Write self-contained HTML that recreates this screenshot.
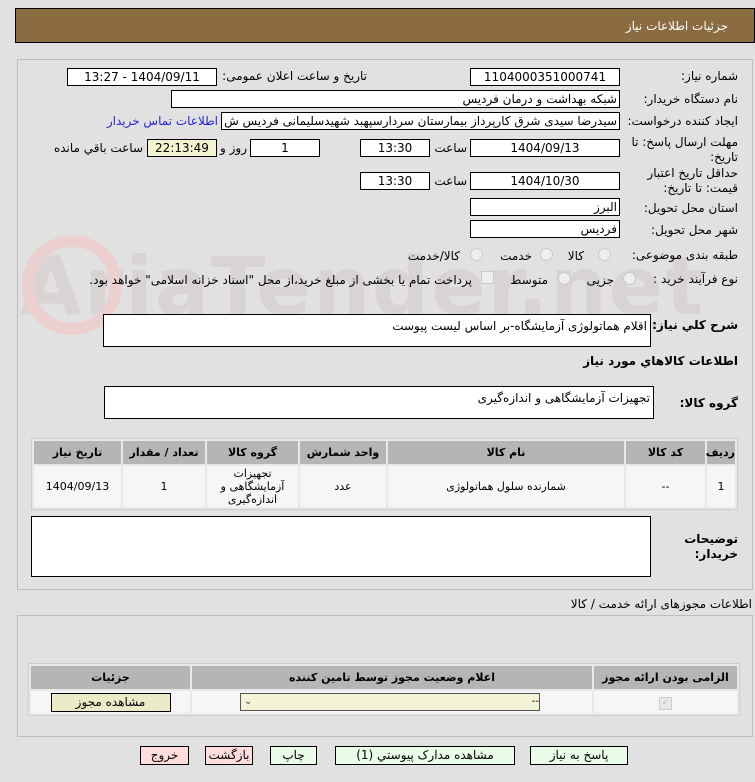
<!DOCTYPE html>
<html><head><meta charset="utf-8"><style>
body{margin:0;width:755px;height:782px;background:#e1e1e1;font-family:"DejaVu Sans","Liberation Sans",sans-serif;font-size:11px;color:#000;position:relative;overflow:hidden}
.a{position:absolute;white-space:nowrap}
.box{position:absolute;background:#fff;border:1px solid #000;box-sizing:border-box;font-size:12px;line-height:16px;text-align:center;direction:rtl}
.l{position:absolute;direction:rtl;text-align:right;white-space:nowrap;font-size:12px}
.panel{position:absolute;border:1px solid #bdbdbd;box-sizing:border-box}
table{border-collapse:separate;border-spacing:2px;position:absolute;direction:rtl;background:#e8e8e8;border:1px solid #ccc;table-layout:fixed}
th{background:#b5b5b5;font-weight:bold;font-size:11px;height:23px;padding:0}
td{background:#f6f6f6;text-align:center;font-size:11px;padding:0}
.btn{position:absolute;border:1px solid #000;box-sizing:border-box;height:19px;text-align:center;font-size:12px;line-height:17px;background:#e9fde9;direction:rtl}
.rad{position:absolute;width:11px;height:11px;border-radius:50%;border:1px solid #c8c8c8;background:#eee}
</style></head><body>
<div class="a" style="left:15px;top:8px;width:740px;height:35px;background:#8b6b40;border:1px solid #000;box-sizing:border-box"></div>
<div class="l" style="right:27px;top:19px;color:#fff;font-size:12px">جزئیات اطلاعات نیاز</div>
<div class="a" style="left:20px;top:240px;font-size:80px;color:#d9d3d3;font-weight:bold;letter-spacing:2px">AriaTender.net</div>
<div class="a" style="left:22px;top:235px;width:100px;height:100px;border-radius:50%;border:12px solid #ecd0d0;box-sizing:border-box"></div>
<div class="panel" style="left:17px;top:59px;width:736px;height:531px"></div>

<div class="l" style="right:17px;top:69px">شماره نیاز:</div>
<div class="box" style="left:470px;top:68px;width:150px;height:18px">1104000351000741</div>
<div class="l" style="right:388px;top:69px">تاریخ و ساعت اعلان عمومی:</div>
<div class="box" style="left:67px;top:68px;width:150px;height:18px">1404/09/11 - 13:27</div>

<div class="l" style="right:17px;top:92px">نام دستگاه خریدار:</div>
<div class="box" style="left:171px;top:90px;width:449px;height:18px;text-align:right;padding-right:2px">شبکه بهداشت و درمان فردیس</div>

<div class="l" style="right:17px;top:114px">ایجاد کننده درخواست:</div>
<div class="box" style="left:221px;top:112px;width:399px;height:18px;text-align:right;padding-right:2px;overflow:hidden">سیدرضا سیدی شرق کارپرداز بیمارستان سردارسپهبد شهیدسلیمانی فردیس ش</div>
<div class="l" style="right:537px;top:114px;color:#2424d6">اطلاعات تماس خریدار</div>

<div class="l" style="right:17px;top:135px">مهلت ارسال پاسخ: تا</div>
<div class="l" style="right:17px;top:150px">تاریخ:</div>
<div class="box" style="left:470px;top:139px;width:150px;height:18px">1404/09/13</div>
<div class="l" style="right:288px;top:141px">ساعت</div>
<div class="box" style="left:360px;top:139px;width:70px;height:18px">13:30</div>
<div class="box" style="left:250px;top:139px;width:70px;height:18px">1</div>
<div class="l" style="right:508px;top:141px">روز و</div>
<div class="box" style="left:147px;top:139px;width:70px;height:18px;background:#f3f3d0">22:13:49</div>
<div class="l" style="right:612px;top:141px">ساعت باقي مانده</div>

<div class="l" style="right:17px;top:166px">حداقل تاریخ اعتبار</div>
<div class="l" style="right:17px;top:181px">قیمت: تا تاریخ:</div>
<div class="box" style="left:470px;top:172px;width:150px;height:18px">1404/10/30</div>
<div class="l" style="right:288px;top:174px">ساعت</div>
<div class="box" style="left:360px;top:172px;width:70px;height:18px">13:30</div>

<div class="l" style="right:17px;top:201px">استان محل تحویل:</div>
<div class="box" style="left:470px;top:198px;width:150px;height:18px;text-align:right;padding-right:2px">البرز</div>
<div class="l" style="right:17px;top:223px">شهر محل تحویل:</div>
<div class="box" style="left:470px;top:220px;width:150px;height:18px;text-align:right;padding-right:2px">فردیس</div>

<div class="l" style="right:17px;top:248px">طبقه بندی موضوعی:</div>
<div class="rad" style="left:598px;top:248px"></div><div class="l" style="right:171px;top:249px">کالا</div>
<div class="rad" style="left:540px;top:248px"></div><div class="l" style="right:223px;top:249px">خدمت</div>
<div class="rad" style="left:470px;top:248px"></div><div class="l" style="right:295px;top:249px">کالا/خدمت</div>

<div class="l" style="right:17px;top:272px">نوع فرآیند خرید :</div>
<div class="rad" style="left:623px;top:272px"></div><div class="l" style="right:141px;top:273px">جزیی</div>
<div class="rad" style="left:558px;top:272px"></div><div class="l" style="right:207px;top:273px">متوسط</div>
<div class="a" style="left:481px;top:271px;width:11px;height:11px;border:1px solid #c8c8c8;background:#eee"></div>
<div class="l" style="right:283px;top:273px">پرداخت تمام یا بخشی از مبلغ خرید،از محل "اسناد خزانه اسلامی" خواهد بود.</div>

<div class="l" style="right:17px;top:318px;font-weight:bold">شرح کلي نیاز:</div>
<div class="box" style="left:103px;top:314px;width:548px;height:33px;text-align:right;padding-right:3px;line-height:22px">اقلام هماتولوژی آزمایشگاه-بر اساس لیست پیوست</div>
<div class="l" style="right:17px;top:354px;font-weight:bold">اطلاعات کالاهاي مورد نیاز</div>
<div class="l" style="right:17px;top:396px;font-weight:bold">گروه کالا:</div>
<div class="box" style="left:104px;top:386px;width:550px;height:33px;text-align:right;padding-right:3px;line-height:22px">تجهیزات آزمایشگاهی و اندازه‌گیری</div>

<table style="left:31px;top:438px;width:707px">
<tr><th style="width:28px">ردیف</th><th style="width:79px">کد کالا</th><th style="width:236px">نام کالا</th><th style="width:86px">واحد شمارش</th><th style="width:91px">گروه کالا</th><th style="width:82px">تعداد / مقدار</th><th>تاریخ نیاز</th></tr>
<tr style="height:41px"><td>1</td><td>--</td><td>شمارنده سلول هماتولوژی</td><td>عدد</td><td style="line-height:13px">تجهیزات<br>آزمایشگاهی و<br>اندازه‌گیری</td><td>1</td><td>1404/09/13</td></tr>
</table>

<div class="l" style="right:17px;top:532px;font-weight:bold">توضیحات</div>
<div class="l" style="right:17px;top:547px;font-weight:bold">خریدار:</div>
<div class="box" style="left:31px;top:516px;width:620px;height:61px"></div>

<div class="l" style="right:3px;top:597px">اطلاعات مجوزهای ارائه خدمت / کالا</div>
<div class="panel" style="left:17px;top:615px;width:736px;height:122px"></div>
<table style="left:28px;top:663px;width:712px">
<tr><th style="width:143px">الزامی بودن ارائه مجوز</th><th>اعلام وضعیت مجوز توسط تامین کننده</th><th style="width:159px">جزئیات</th></tr>
<tr style="height:22px"><td><span style="display:inline-block;width:11px;height:11px;border:1px solid #ccc;background:#e8e8e8;color:#bbb;font-size:9px;line-height:11px">✓</span></td>
<td><div style="margin:0 auto 0 48px;width:298px;height:16px;border:1px solid #555;background:#f3f3d8;text-align:right;font-size:10px;line-height:16px;position:relative">-- <span style="position:absolute;left:3px;top:0;color:#444">⌄</span></div></td>
<td><div style="margin:0 auto;width:118px;height:17px;border:1px solid #000;background:#ecebc8;font-size:12px;line-height:16px">مشاهده مجوز</div></td></tr>
</table>

<div class="btn" style="left:530px;top:746px;width:98px">پاسخ به نیاز</div>
<div class="btn" style="left:335px;top:746px;width:180px">مشاهده مدارک پیوستي (1)</div>
<div class="btn" style="left:270px;top:746px;width:47px">چاپ</div>
<div class="btn" style="left:205px;top:746px;width:48px;background:#fdd">بازگشت</div>
<div class="btn" style="left:140px;top:746px;width:49px;background:#fdd">خروج</div>
</body></html>
